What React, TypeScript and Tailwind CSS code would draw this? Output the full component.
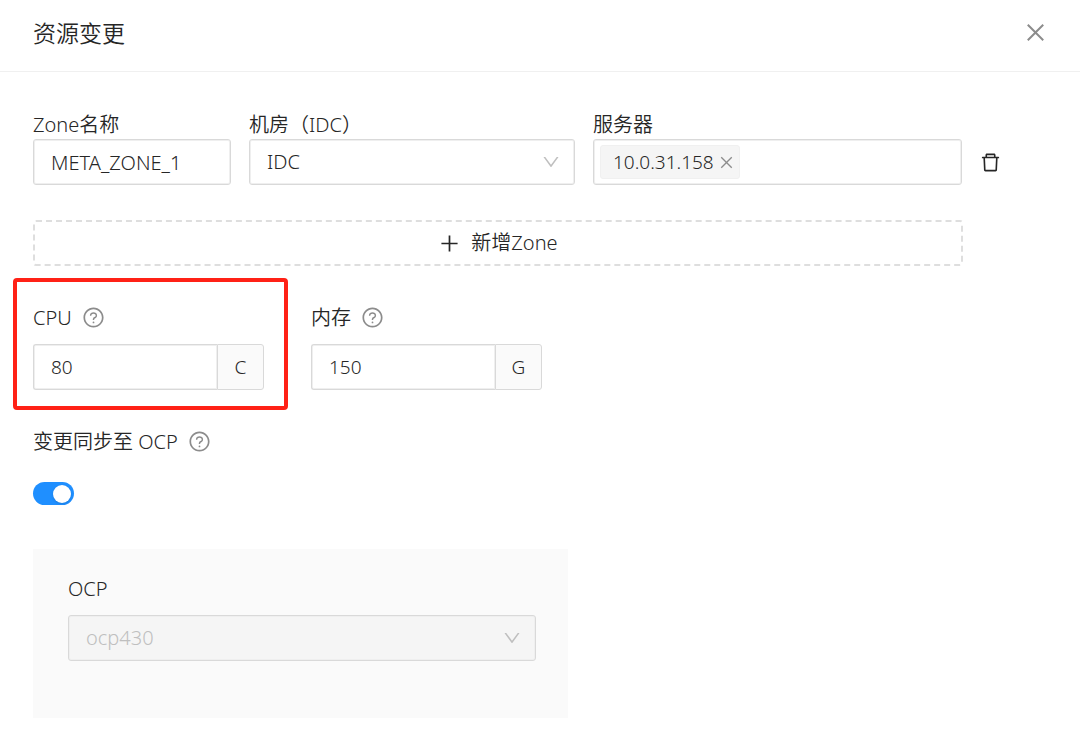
import { useState, type ReactNode, type SelectHTMLAttributes } from "react";
import {
  AiOutlineClose,
  AiOutlineDelete,
  AiOutlineDown,
  AiOutlinePlus,
  AiOutlineQuestionCircle,
} from "react-icons/ai";

const label = "flex items-center text-xl leading-[29px]";
const field =
  "h-[46px] w-full rounded-[3px] border border-[#d9d9d9] bg-white px-[17px] outline-none shadow-[inset_0_0_0_1px_#efefef]";

function Help({ title }: { title: string }) {
  return (
    <button type="button" aria-label={title} className="ml-2.5 text-[#8c8c8c]">
      <AiOutlineQuestionCircle size={23} />
    </button>
  );
}

function Select({
  children,
  ...rest
}: SelectHTMLAttributes<HTMLSelectElement> & { children: ReactNode }) {
  return (
    <div className="relative">
      <select
        {...rest}
        className={`${field} appearance-none text-xl disabled:bg-[#f5f5f5] disabled:text-[#bfbfbf] disabled:opacity-100`}
      >
        {children}
      </select>
      <AiOutlineDown
        size={20}
        className="pointer-events-none absolute inset-y-0 right-3.5 my-auto text-[#bfbfbf]"
      />
    </div>
  );
}

function AmountField({
  id,
  name,
  help,
  unit,
  initial,
}: {
  id: string;
  name: string;
  help: string;
  unit: string;
  initial: string;
}) {
  const [value, setValue] = useState(initial);
  return (
    <div className="w-[231px]">
      <div className={label}>
        <label htmlFor={id}>{name}</label>
        <Help title={help} />
      </div>
      <div className="mt-3 flex">
        <input
          id={id}
          inputMode="numeric"
          value={value}
          onChange={(e) => setValue(e.target.value)}
          className={`${field} min-w-0 flex-1 rounded-r-none border-r-0 text-[19px]`}
        />
        <span className="flex w-[47px] shrink-0 items-center justify-center rounded-r-[3px] border border-[#d9d9d9] bg-[#fafafa] text-[19px]">
          {unit}
        </span>
      </div>
    </div>
  );
}

export default function App() {
  const [zone, setZone] = useState("META_ZONE_1");
  const [servers, setServers] = useState(["10.0.31.158"]);
  const [sync, setSync] = useState(true);

  return (
    <div className="min-h-screen bg-white font-['Noto_Sans','Noto_Sans_CJK_SC',sans-serif] font-[350] text-[#262626]">
      <header className="flex h-18 items-center justify-between border-b border-[#f0f0f0] pr-8 pb-1.5 pl-[33px]">
        <h1 className="text-[23px] leading-8">资源变更</h1>
        <button type="button" aria-label="关闭" className="text-[#8c8c8c]">
          <AiOutlineClose size={25} />
        </button>
      </header>

      <main className="pt-[38px] pr-20 pb-4 pl-[33px]">
        <div className="grid grid-cols-[minmax(0,198fr)_minmax(0,326fr)_minmax(0,369fr)_20px] items-end gap-[18px]">
          <div>
            <label htmlFor="zone" className={label}>
              Zone名称
            </label>
            <input
              id="zone"
              value={zone}
              onChange={(e) => setZone(e.target.value)}
              className={`${field} text-xl`}
            />
          </div>
          <div>
            <label htmlFor="idc" className={label}>
              机房（IDC）
            </label>
            <Select id="idc">
              <option>IDC</option>
            </Select>
          </div>
          <div>
            <label htmlFor="server" className={label}>
              服务器
            </label>
            <div className="flex h-[46px] items-center rounded-[3px] border border-[#d9d9d9] px-1.5 text-[19px] shadow-[inset_0_0_0_1px_#efefef]">
              {servers.map((ip) => (
                <span
                  key={ip}
                  className="flex h-[34px] items-center gap-1 rounded-[3px] border border-[#f0f0f0] bg-[#f5f5f5] pr-1 pl-3"
                >
                  {ip}
                  <button
                    type="button"
                    aria-label={`移除 ${ip}`}
                    onClick={() => setServers(servers.filter((s) => s !== ip))}
                    className="text-[#8c8c8c]"
                  >
                    <AiOutlineClose size={17} />
                  </button>
                </span>
              ))}
              <input id="server" className="min-w-0 flex-1 px-2 outline-none" />
            </div>
          </div>
          <button
            type="button"
            aria-label="删除"
            className="flex h-[46px] items-center justify-center"
          >
            <AiOutlineDelete size={23} className="shrink-0" />
          </button>
        </div>

        <div className="mt-[35px] pr-[37px]">
          <button
            type="button"
            className="flex h-[46px] w-full items-center justify-center gap-2.5 rounded-[3px] border-2 border-dashed border-[#dedede] text-xl"
          >
            <AiOutlinePlus size={23} />
            新增Zone
          </button>
        </div>

        <div className="mt-[37px] flex gap-[47px]">
          <div className="relative">
            <AmountField id="cpu" name="CPU" help="CPU 说明" unit="C" initial="80" />
            <div className="pointer-events-none absolute -top-[25px] -right-6 -bottom-5 -left-5 rounded-[4px] border-4 border-[#ff2116]" />
          </div>
          <AmountField id="memory" name="内存" help="内存说明" unit="G" initial="150" />
        </div>

        <div className={`${label} mt-[37px]`}>
          <label htmlFor="sync">变更同步至 OCP</label>
          <Help title="同步说明" />
        </div>
        <input
          id="sync"
          type="checkbox"
          role="switch"
          checked={sync}
          onChange={(e) => setSync(e.target.checked)}
          className="mt-[26px] flex h-[23px] w-[41px] appearance-none items-center rounded-full bg-[#bfbfbf] px-[3px] before:size-[18px] before:rounded-full before:bg-white before:shadow-sm checked:justify-end checked:bg-[#1f8fff]"
        />

        <section className="mt-11 w-full max-w-[535px] bg-[#fafafa] pt-[25px] pr-8 pb-[57px] pl-[35px]">
          <label htmlFor="ocp" className={`${label} mb-3`}>
            OCP
          </label>
          <Select id="ocp" disabled>
            <option>ocp430</option>
          </Select>
        </section>
      </main>
    </div>
  );
}
